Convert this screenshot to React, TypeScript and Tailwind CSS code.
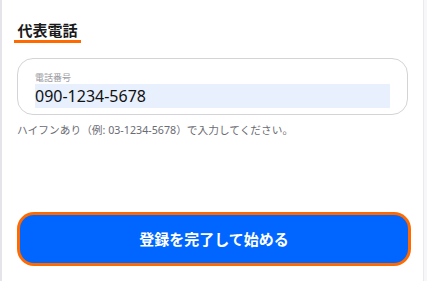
import React from "react";

export default function App() {
  const font = { fontFamily: '"Noto Sans", "Noto Sans CJK JP", sans-serif' };
  return (
    <div className="w-[427px] h-[281px] bg-[#f7f7f9] flex overflow-hidden" style={font}>
      <div className="w-[424px] h-full bg-white border-l-2 border-r border-l-[#e4e4ea] border-r-[#e9e9ee] px-[15px] pt-[18px] flex flex-col">
        <div className="h-[22px]">
          <span className="inline-block -ml-[3px] px-[3.5px] text-[15px] leading-[19px] font-bold text-[#1a1a1a] border-b-[3px] border-[#ff6a00]">
            代表電話
          </span>
        </div>
        <div className="mt-[18px] h-[57px] border border-[#d4d4d8] rounded-[16px] pt-[13px] pl-[17px] pr-[17px]">
          <div className="text-[9px] leading-[12px] text-[#9a9aa2]">電話番号</div>
          <div className="h-[24px] bg-[#e8f0fe] text-[16px] leading-[24px] text-[#111]">090-1234-5678</div>
        </div>
        <div className="mt-[8px] text-[10.7px] leading-[14px] text-[#6b6b73]">
          ハイフンあり（例: 03-1234-5678）で入力してください。
        </div>
        <div className="mt-[75px] w-[394px] h-[54px] rounded-[17px] bg-[#ff6a00] p-[3px]">
          <button className="w-full h-full rounded-[14px] bg-[#0066ff] text-white text-[15px] font-bold flex items-center justify-center">
            登録を完了して始める
          </button>
        </div>
      </div>
    </div>
  );
}
